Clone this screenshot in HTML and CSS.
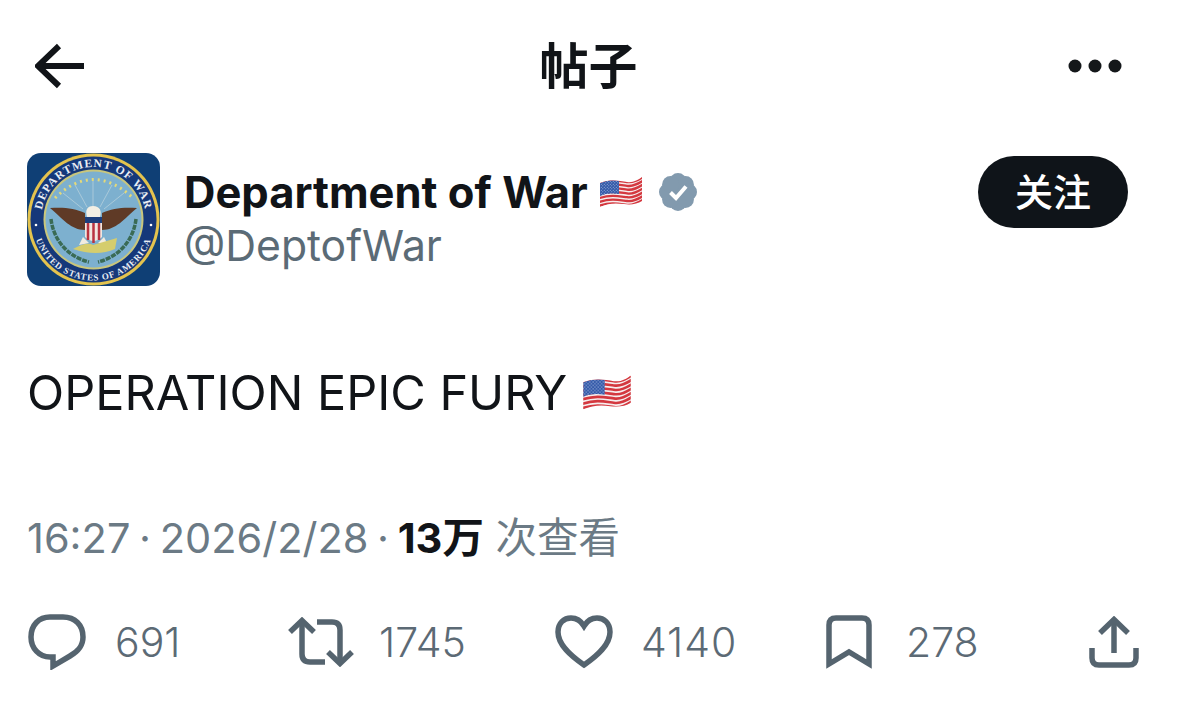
FILE: index.html
```html
<!DOCTYPE html>
<html lang="zh">
  <head>
    <meta charset="utf-8" />
    <meta name="viewport" content="width=device-width, initial-scale=1" />
    <title>帖子</title>
    <link rel="stylesheet" href="styles.css">
  </head>
  <body>
    <svg class="defs" width="0" height="0">
      <defs>
        <pattern id="stars" width="3" height="3" patternUnits="userSpaceOnUse">
          <rect width="3" height="3" fill="#3459a8"/>
          <circle cx="0.800" cy="0.800" r="0.550" fill="#a9bde2"/>
          <circle cx="2.300" cy="2.300" r="0.550" fill="#a9bde2"/>
        </pattern>
        <clipPath id="flagShape">
          <path d="M1 7 C12 3 20 5 28 6 C34 7 39 4 43 1 V25 C38 28 32 29 25 28 C17 27 9 27 1 31 Z"/>
        </clipPath>
        <path id="stripe" d="M0 7 C12 3 20 5 28 6 C34 7 39 4 44 1" fill="none" stroke="#d4383f" stroke-width="2.300"/>
        <symbol id="flag" viewBox="0 0 44 32">
          <g clip-path="url(#flagShape)">
            <rect width="44" height="32" fill="#f6eeee"/>
            <use href="#stripe" y="0"/>
            <use href="#stripe" y="3.800"/>
            <use href="#stripe" y="7.600"/>
            <use href="#stripe" y="11.400"/>
            <use href="#stripe" y="15.200"/>
            <use href="#stripe" y="19"/>
            <use href="#stripe" y="22.800"/>
            <path d="M1 7 C8 4 14 4 20 4.800 V18 C13 17 7 17 1 20 Z" fill="url(#stars)"/>
          </g>
        </symbol>
      </defs>
    </svg>

    <div class="post">
      <div class="topbar">
        <svg class="back" viewBox="0 0 50 46" fill="none" stroke="#111418" stroke-width="6">
          <path d="M49 23 H5"/>
          <path d="M24 3 L3 23 L24 43"/>
        </svg>
        <div class="title">帖子</div>
        <svg class="more" viewBox="0 0 54 14" fill="#14171a">
          <circle cx="7" cy="7" r="6.500"/>
          <circle cx="27" cy="7" r="6.500"/>
          <circle cx="47" cy="7" r="6.500"/>
        </svg>
      </div>

      <div class="author">
        <svg class="avatar" viewBox="0 0 133 133">
          <rect width="133" height="133" rx="14" fill="#0f3f75"/>
          <circle cx="66.500" cy="66.500" r="66" fill="#e3c34e"/>
          <circle cx="66.500" cy="66.500" r="63" fill="#15387a"/>
          <circle cx="66.500" cy="66.500" r="50" fill="#c9c67c"/>
          <circle cx="66.500" cy="66.500" r="48" fill="#7db0cf"/>
          <path id="arcTop" d="M14 66.500 A52.500 52.500 0 0 1 119 66.500" fill="none"/>
          <path id="arcBottom" d="M5.500 66.500 A61 61 0 0 0 127.500 66.500" fill="none"/>
          <text class="seal-text"><textPath href="#arcTop" startOffset="50%" text-anchor="middle">DEPARTMENT OF WAR</textPath></text>
          <text class="seal-text small"><textPath href="#arcBottom" startOffset="50%" text-anchor="middle">UNITED STATES OF AMERICA</textPath></text>
          <circle cx="9" cy="72" r="1.300" fill="#fff"/>
          <circle cx="124" cy="72" r="1.300" fill="#fff"/>
          <path d="M28 45 Q66 8 106 45" fill="none" stroke="#e3d97a" stroke-width="3" stroke-dasharray="2 4"/>
          <path d="M66 28 V54 M48 32 L60 54 M85 32 L73 54 M36 40 L56 56 M97 40 L77 56" stroke="#b5cfdc" stroke-width="0.800"/>
          <path d="M23 55 C36 54 48 55 58 60 L58 77 C44 77 36 66 23 55 Z" fill="#5f3a26"/>
          <path d="M110 55 C97 54 85 55 75 60 L75 77 C89 77 97 66 110 55 Z" fill="#5f3a26"/>
          <path d="M60 64 C58 57 60 53 66 53 C73 53 75 58 73 64 Z" fill="#f3efe4"/>
          <path d="M58 64 H75 V84 Q66.500 92 58 84 Z" fill="#f1e7e0"/>
          <path d="M58 64 H75 V70 H58 Z" fill="#1d3f7c"/>
          <path d="M61 70 V87 M66.500 70 V90 M72 70 V87" stroke="#b93340" stroke-width="2.500"/>
          <path d="M56 84 L52 92 L62 90 Z M77 84 L81 92 L71 90 Z" fill="#f1ece0"/>
          <path d="M46 96 Q60 88 66 92 L90 85 L88 96 Q70 104 46 96 Z" fill="#d5cd6d"/>
          <path d="M24 66 C26 84 38 103 62 109" fill="none" stroke="#3a6b55" stroke-width="3.500" stroke-dasharray="5 1"/>
          <path d="M109 66 C107 84 95 103 71 109" fill="none" stroke="#3a6b55" stroke-width="3.500" stroke-dasharray="5 1"/>
        </svg>
        <div class="names">
          <div class="name-row">
            <span class="name">Department of War</span>
            <svg class="flag-small"><use href="#flag"/></svg>
            <svg class="badge" viewBox="0 0 38 38">
              <g fill="#829aae">
                <circle cx="19" cy="19" r="14"/>
                <circle cx="19" cy="8.500" r="8.500"/>
                <circle cx="26.400" cy="11.600" r="8.500"/>
                <circle cx="29.500" cy="19" r="8.500"/>
                <circle cx="26.400" cy="26.400" r="8.500"/>
                <circle cx="19" cy="29.500" r="8.500"/>
                <circle cx="11.600" cy="26.400" r="8.500"/>
                <circle cx="8.500" cy="19" r="8.500"/>
                <circle cx="11.600" cy="11.600" r="8.500"/>
              </g>
              <path d="M11.500 19.500 L17 25 L27 13.500" fill="none" stroke="#fff" stroke-width="4"/>
            </svg>
          </div>
          <div class="handle">@DeptofWar</div>
        </div>
        <div class="follow">关注</div>
      </div>

      <div class="text">
        <span>OPERATION EPIC FURY</span>
        <svg class="flag-big"><use href="#flag"/></svg>
      </div>

      <div class="meta">16:27 · 2026/2/28 · <b>13万</b> 次查看</div>

      <div class="actions">
        <div class="action a-reply">
          <svg class="ic" viewBox="0 0 60 56" fill="none" stroke="#55646f" stroke-width="5.500">
            <path d="M23 3 H36 C48 3 56 11 56 23 C56 33 50 38 43 42 L26 52 V43 H23 C12 43 4 34 4 23 C4 11 12 3 23 3 Z"/>
          </svg>
          <span>691</span>
        </div>
        <div class="action a-rt">
          <svg class="ic" viewBox="0 0 66 50" fill="none" stroke="#55646f" stroke-width="5.500">
            <path d="M2 15 L14 3.500 L26 15"/>
            <path d="M14 4 V37 Q14 45 22 45 H37"/>
            <path d="M64 35 L52 46.500 L40 35"/>
            <path d="M52 46 V13 Q52 5 44 5 H29"/>
          </svg>
          <span>1745</span>
        </div>
        <div class="action a-like">
          <svg class="ic" viewBox="0 0 58 54" fill="none" stroke="#55646f" stroke-width="5.500">
            <path d="M29 50 C16 41 3 30 3 17 C3 8 9 3 16 3 C22 3 26 6 29 11 C32 6 36 3 42 3 C49 3 55 8 55 17 C55 30 42 41 29 50 Z"/>
          </svg>
          <span>4140</span>
        </div>
        <div class="action a-save">
          <svg class="ic" viewBox="0 0 46 54" fill="none" stroke="#55646f" stroke-width="5.500">
            <path d="M3 49 V10 Q3 3 10 3 H36 Q43 3 43 10 V49 L23 37 Z"/>
          </svg>
          <span>278</span>
        </div>
        <svg class="ic share" viewBox="0 0 50 52" fill="none" stroke="#55646f" stroke-width="5.500">
          <path d="M25 37 V4"/>
          <path d="M11 17 L25 3.500 L39 17"/>
          <path d="M3 32 V42 Q3 49 10 49 H40 Q47 49 47 42 V32"/>
        </svg>
      </div>
    </div>
  </body>
</html>
```

FILE: styles.css
```css
:root {
  --ink: #111418;
  --grey: #5c6a75;
}
html, body {
  margin: 0;
  background: #fff;
}
.defs {
  display: block;
  height: 0;
}
.post {
  width: 1179px;
  height: 712px;
  overflow: hidden;
  box-sizing: border-box;
  padding: 0 40px 0 27px;
  font-family: "Liberation Sans", "Noto Sans CJK SC", sans-serif;
  color: var(--ink);
}
.topbar {
  display: flex;
  align-items: center;
  justify-content: space-between;
  height: 132px;
  padding: 0 17px 0 8px;
}
.back {
  width: 50px;
  height: 46px;
}
.title {
  font-size: 49px;
  font-weight: 700;
  font-family: "Noto Sans CJK SC", sans-serif;
  margin-left: 24px;
  margin-bottom: 8px;
}
.more {
  width: 54px;
  height: 14px;
}
.author {
  display: flex;
  align-items: flex-start;
  margin-top: 21px;
  height: 133px;
}
.avatar {
  width: 133px;
  height: 133px;
  flex-shrink: 0;
}
.seal-text {
  font-family: "Liberation Serif", serif;
  font-size: 11.500px;
  font-weight: 700;
  fill: #e8edf3;
  letter-spacing: 1px;
}
.seal-text.small {
  font-size: 9px;
  letter-spacing: 0.800px;
}
.names {
  margin-left: 24px;
  flex: 1;
}
.name-row {
  display: flex;
  align-items: center;
  height: 54px;
  margin-top: 12px;
}
.name {
  font-family: Inter, sans-serif;
  font-size: 43.500px;
  font-weight: 700;
}
.flag-small {
  width: 44px;
  height: 32px;
  margin-left: 11px;
}
.badge {
  width: 38px;
  height: 38px;
  margin-left: 16px;
}
.handle {
  font-family: Inter, sans-serif;
  font-size: 42.700px;
  color: #5b6b76;
  line-height: 54px;
}
.follow {
  width: 150px;
  height: 72px;
  box-sizing: border-box;
  padding-bottom: 5px;
  margin-top: 3px;
  margin-right: 11px;
  border-radius: 36px;
  background: #0f1419;
  color: #fff;
  font-family: "Noto Sans CJK SC", sans-serif;
  font-size: 38px;
  font-weight: 500;
  display: flex;
  align-items: center;
  justify-content: center;
}
.text {
  display: flex;
  align-items: center;
  margin-top: 76px;
  height: 60px;
  font-family: Inter, sans-serif;
  font-size: 48.600px;
}
.flag-big {
  width: 50px;
  height: 37px;
  margin-left: 15px;
}
.meta {
  margin-top: 88px;
  height: 56px;
  line-height: 56px;
  font-family: Inter, "Noto Sans CJK SC", sans-serif;
  font-size: 41.500px;
  word-spacing: -3px;
  color: #6b7a85;
}
.meta b {
  color: var(--ink);
  margin-right: 3px;
}
.actions {
  display: flex;
  align-items: center;
  margin-top: 48px;
  height: 56px;
  color: var(--grey);
  font-family: Inter, sans-serif;
  font-size: 41px;
  font-weight: 300;
}
.action {
  display: flex;
  align-items: center;
}
.ic {
  flex-shrink: 0;
}
.a-reply {
  width: 261px;
  gap: 28px;
}
.a-reply .ic {
  width: 60px;
  height: 56px;
}
.a-rt {
  width: 267px;
  gap: 25px;
}
.a-rt .ic {
  width: 66px;
  height: 50px;
}
.a-like {
  width: 271px;
  gap: 28px;
}
.a-like .ic {
  width: 58px;
  height: 54px;
}
.a-like span {
  letter-spacing: 1px;
}
.a-save {
  flex: 1;
  gap: 34px;
}
.a-save .ic {
  width: 46px;
  height: 54px;
}
.share {
  width: 50px;
  height: 52px;
}
```
